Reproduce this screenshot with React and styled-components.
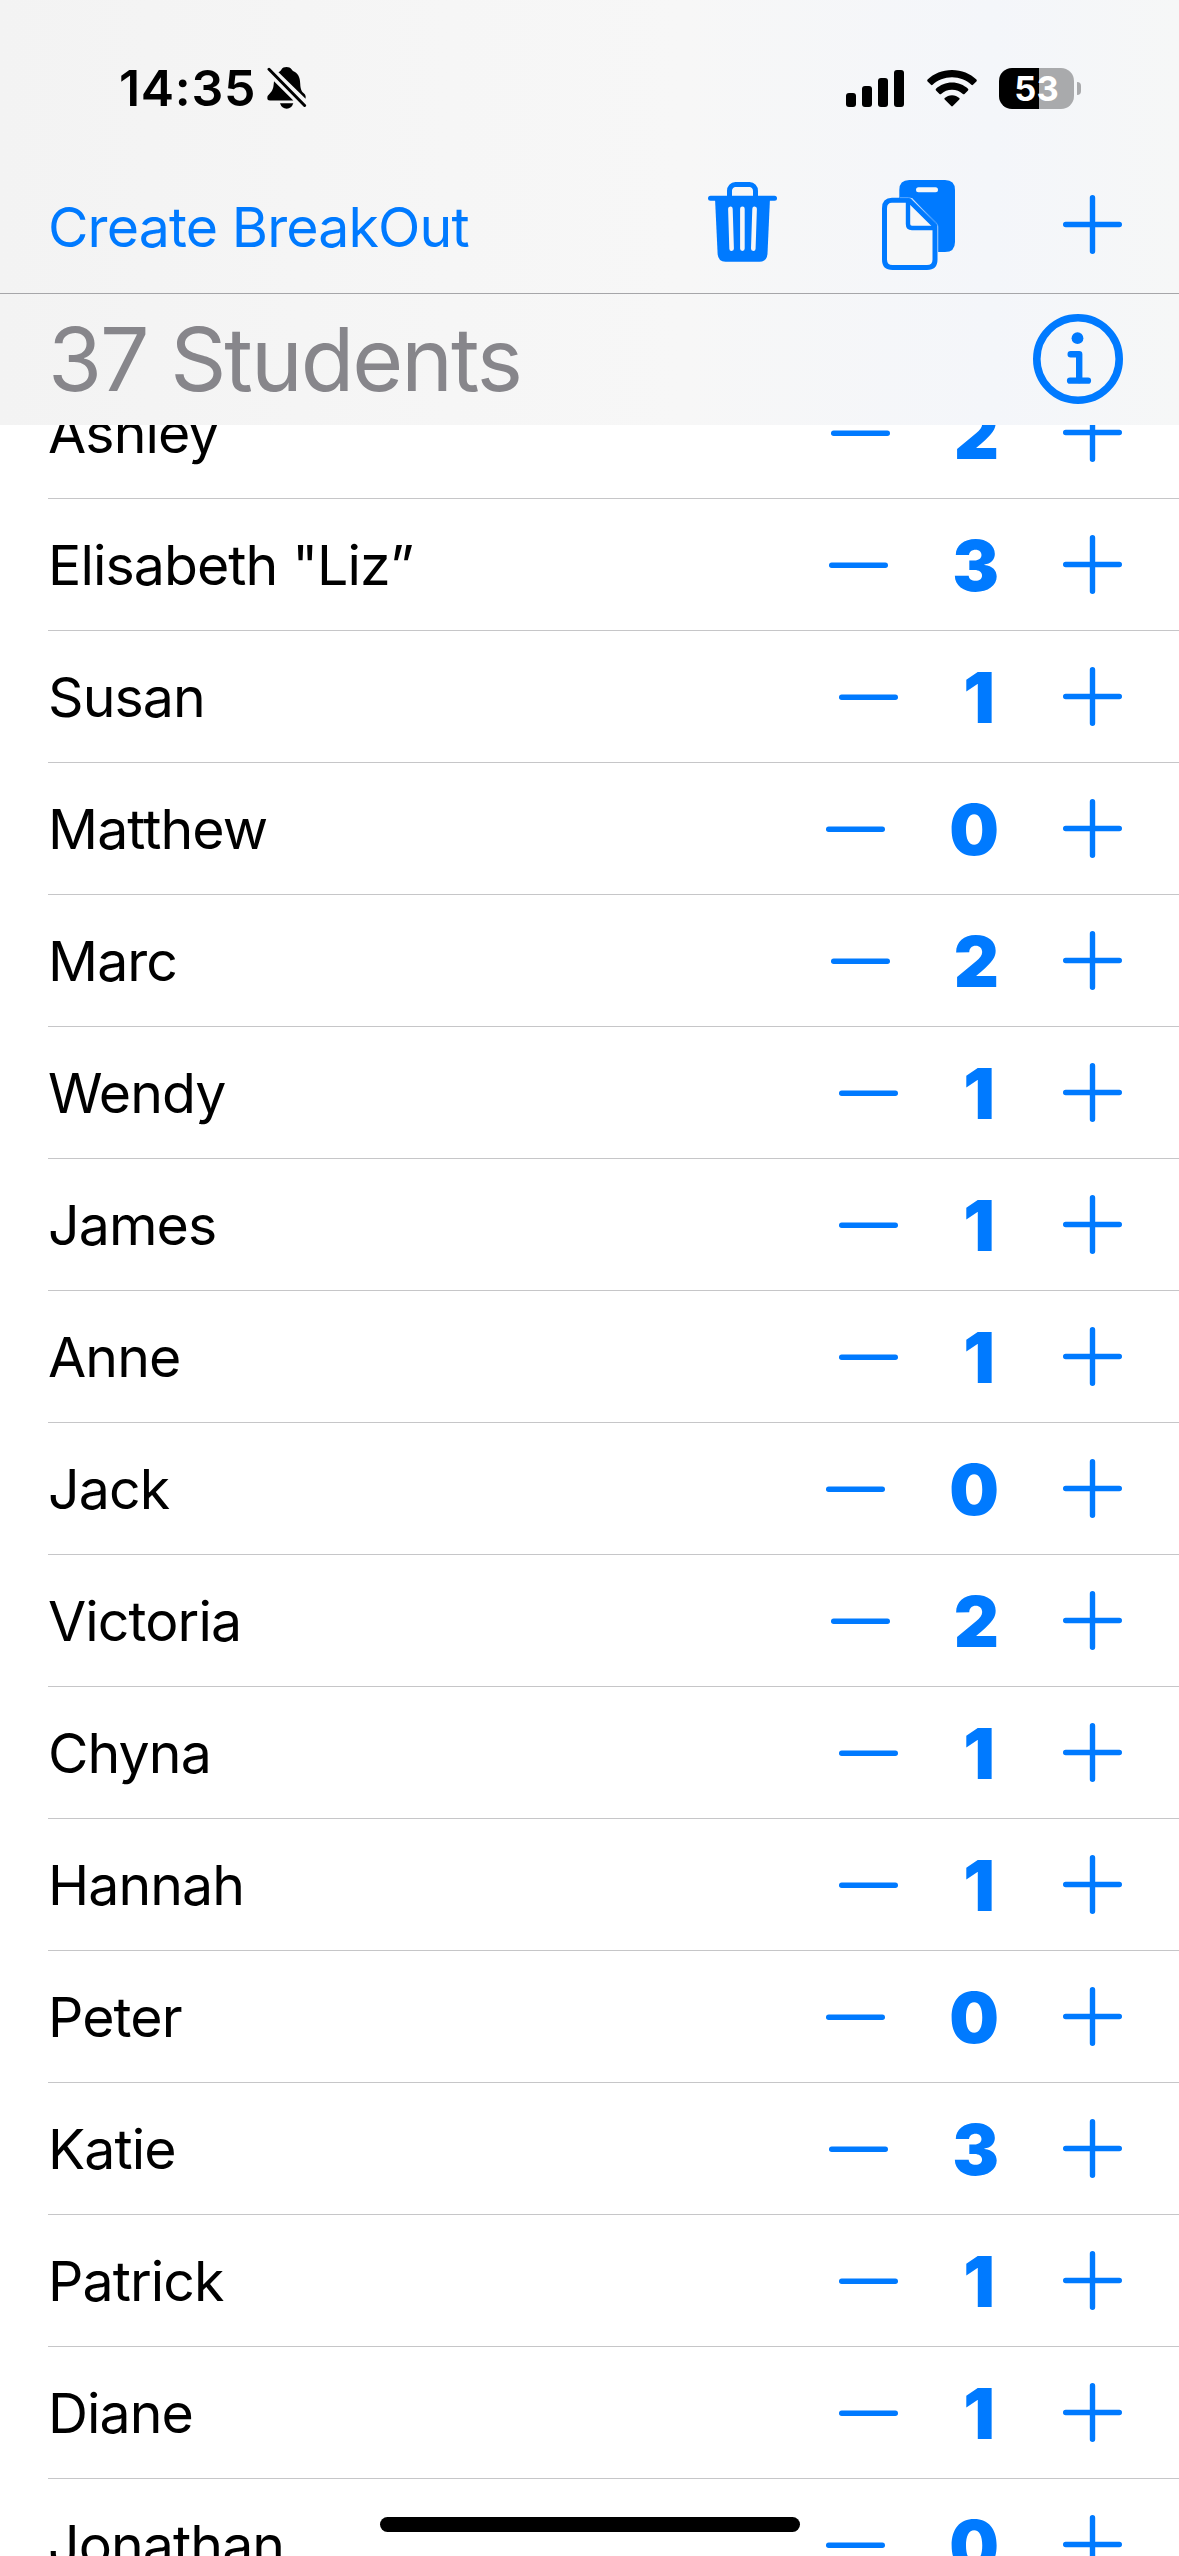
import React from 'react'
import styled, { createGlobalStyle } from 'styled-components'

const blue = '#007aff'

const students = [
  { name: 'Ashley', count: 2 },
  { name: 'Elisabeth "Liz”', count: 3 },
  { name: 'Susan', count: 1 },
  { name: 'Matthew', count: 0 },
  { name: 'Marc', count: 2 },
  { name: 'Wendy', count: 1 },
  { name: 'James', count: 1 },
  { name: 'Anne', count: 1 },
  { name: 'Jack', count: 0 },
  { name: 'Victoria', count: 2 },
  { name: 'Chyna', count: 1 },
  { name: 'Hannah', count: 1 },
  { name: 'Peter', count: 0 },
  { name: 'Katie', count: 3 },
  { name: 'Patrick', count: 1 },
  { name: 'Diane', count: 1 },
  { name: 'Jonathan', count: 0 }
]

const Plus = () => (
  <svg width='59' height='59' viewBox='0 0 59 59' fill='none' stroke={blue} strokeWidth='5.4' strokeLinecap='round'>
    <path d='M2.7 29.5H56.3M29.5 2.7V56.3' />
  </svg>
)

const Minus = () => (
  <svg width='59' height='59' viewBox='0 0 59 59' fill='none' stroke={blue} strokeWidth='5.4' strokeLinecap='round'>
    <path d='M2.7 30.2H56.3' />
  </svg>
)

const Trash = () => (
  <svg width='69' height='80' viewBox='0 0 69 80' fill='none' strokeLinecap='round'>
    <path d='M21.5 16V9A6.2 6.2 0 0 1 27.5 2.5H41.5A6.2 6.2 0 0 1 47.5 9V16' stroke={blue} strokeWidth='5' />
    <path d='M2.5 16.3H66.5' stroke={blue} strokeWidth='5' />
    <path d='M7 16H62L59.5 71.5Q59 79.7 51.5 79.7H17.5Q10 79.7 9.6 71.5Z' fill={blue} />
    <path d='M22.4 26.7L23.6 66.6M34.4 26.7V66.6M46.6 26.7L45.3 66.6' stroke='#f6f6f7' strokeWidth='4.6' />
  </svg>
)

const Docs = () => (
  <svg width='73' height='90' viewBox='0 0 73 90' fill='none'>
    <path d='M17.3 18V10Q17.3 0 27.3 0H63Q73 0 73 10V62Q73 72 63 72H56V46L30 18Z' fill={blue} />
    <rect x='34' y='7.3' width='22' height='5' rx='2.5' fill='#f6f7f8' />
    <path d='M10 20.2H27L53 46V79.5Q53 87.5 45 87.5H10.5Q2.5 87.5 2.5 79.5V28.2Q2.5 20.2 10 20.2Z' fill='#f6f7f8' stroke={blue} strokeWidth='5' />
    <path d='M26 20V44Q26 48 30 48H54' stroke={blue} strokeWidth='4.4' />
    <path d='M18 17.6H26.5Q29 17.6 31 19.6L54 42.6Q56 44.6 56 47V72' stroke='#8fc3fd' strokeWidth='.6' />
  </svg>
)

const Info = () => (
  <svg width='90' height='90' viewBox='0 0 90 90' fill='none' stroke={blue} strokeLinecap='round' strokeLinejoin='round'>
    <circle cx='45' cy='45' r='41.2' strokeWidth='7.6' />
    <circle cx='44.5' cy='24.2' r='5.9' fill={blue} stroke='none' />
    <path d='M37.7 40.2H46.2V66' strokeWidth='6.4' />
    <path d='M37 66.7H55' strokeWidth='6.2' />
  </svg>
)

const BellOff = () => (
  <svg width='40' height='44' viewBox='0 0 40 44'>
    <path d='M11.5 6.2C13.5 4.8 14 4.6 14.6 3.2C16 .6 22.5 .2 24.5 3.2C25.3 4.5 26 4.9 27.5 5.7C32 8.5 33 12 33.2 17.5C33.4 25 35.5 26 38 28.5Q39 30 38.6 32.7Z' />
    <path d='M7 15.3L26.3 34.5H3Q.3 34.5 .3 32Q.3 29.5 3.2 27C6.5 23.8 6.5 20 7 15.3Z' />
    <path d='M13 37.3H26.3Q24.5 42.7 19.7 42.7Q14.8 42.7 13 37.3Z' />
    <path d='M2 3.3L37.6 39.5' stroke='#000' strokeWidth='3' strokeLinecap='round' />
  </svg>
)

const Signal = () => (
  <svg width='58' height='37' viewBox='0 0 58 37'>
    <rect x='0' y='23' width='10' height='14' rx='3' />
    <rect x='16' y='16' width='10' height='21' rx='3' />
    <rect x='32' y='8' width='10' height='29' rx='3' />
    <rect x='48' y='0' width='10' height='37' rx='3' />
  </svg>
)

const Wifi = () => (
  <svg width='50' height='37' viewBox='0 0 50 37'>
    <path d='M25 0C34.7 0 43.3 3.7 49.4 9.6Q50.2 10.5 49.4 11.4L46 14.8Q45.2 15.5 44.4 14.8C39.3 10.1 32.5 7.3 25 7.3S10.7 10.1 5.6 14.8Q4.8 15.5 4 14.8L.6 11.4Q-.2 10.5 .6 9.6C6.7 3.7 15.3 0 25 0Z' />
    <path d='M25 12.6C31.2 12.6 36.8 15 41 18.8Q41.8 19.6 41 20.4L37.5 23.9Q36.7 24.6 35.9 23.9C33 21.3 29.2 19.7 25 19.7S17 21.3 14.1 23.9Q13.3 24.6 12.5 23.9L9 20.4Q8.2 19.6 9 18.8C13.2 15 18.8 12.6 25 12.6Z' />
    <path d='M25 25.2C27.8 25.2 30.4 26.3 32.3 28Q33.1 28.8 32.3 29.6L25.8 36.1Q25 36.9 24.2 36.1L17.7 29.6Q16.9 28.8 17.7 28C19.6 26.3 22.2 25.2 25 25.2Z' />
  </svg>
)

const App = () => (
  <Screen>
    <GlobalStyle />
    <Header>
      <StatusBar>
        <Clock>14:35</Clock>
        <BellOff />
        <StatusIcons>
          <Signal />
          <Wifi />
          <Battery>
            <Level>53</Level>
            <Nub />
          </Battery>
        </StatusIcons>
      </StatusBar>
      <Toolbar>
        <CreateButton>Create BreakOut</CreateButton>
        <Actions>
          <TrashButton>
            <Trash />
          </TrashButton>
          <Docs />
          <Plus />
        </Actions>
      </Toolbar>
      <Summary>
        <Total>37 Students</Total>
        <Info />
      </Summary>
    </Header>
    <List>
      {students.map(({ name, count }) => (
        <Row key={name}>
          <Name>{name}</Name>
          <Stepper>
            <Minus />
            <Count $narrow={count === 1}>{count}</Count>
            <Plus />
          </Stepper>
        </Row>
      ))}
    </List>
    <HomeIndicator />
  </Screen>
)

export default App

const GlobalStyle = createGlobalStyle`
  * {
    box-sizing: border-box;
  }
  body {
    margin: 0;
    background: #fff;
    font-family: Inter, 'Liberation Sans', sans-serif;
  }
  svg {
    display: block;
    flex: none;
  }
`

const Screen = styled.div`
  position: relative;
  display: flex;
  flex-direction: column;
  width: 1179px;
  height: 2556px;
  overflow: hidden;
  background: #fff;
`

const Header = styled.header`
  flex: none;
  height: 425px;
  background: linear-gradient(90deg, #f3f3f3 0%, #f6f6f6 38%, #f7f7f7 58%, #f4f6fa 84%, #f6f7f7 100%);
`

const StatusBar = styled.div`
  display: flex;
  align-items: center;
  height: 176px;
  padding: 0 98px 0 119px;
`

const Clock = styled.span`
  width: 148px;
  font-size: 50px;
  font-weight: 600;
  letter-spacing: 0.7px;
`

const StatusIcons = styled.div`
  display: flex;
  align-items: center;
  margin-left: auto;
  gap: 22.5px;
`

const Battery = styled.div`
  display: flex;
  align-items: center;
  gap: 3px;
`

const Level = styled.span`
  width: 75px;
  height: 41px;
  border-radius: 13px;
  background: linear-gradient(90deg, #000 40px, #a9aaac 40px);
  color: #fff;
  font-size: 34.5px;
  font-weight: 700;
  line-height: 41px;
  text-align: center;
`

const Nub = styled.i`
  width: 4px;
  height: 13px;
  border-radius: 0 4px 4px 0;
  background: #a9aaac;
`

const Toolbar = styled.div`
  display: flex;
  align-items: center;
  justify-content: space-between;
  height: 118px;
  padding: 0 57px 20px 48px;
  border-bottom: 1px solid #a6a6a9;
`

const CreateButton = styled.button`
  padding: 3px 0 0;
  border: 0;
  background: none;
  color: ${blue};
  font: inherit;
  font-size: 55.4px;
  letter-spacing: -0.85px;
`

const Actions = styled.div`
  display: flex;
  align-items: center;
  gap: 108px;
`

const TrashButton = styled.span`
  margin-right: -3px;
  padding-bottom: 5px;
`

const Summary = styled.div`
  display: flex;
  align-items: center;
  justify-content: space-between;
  height: 131px;
  padding: 0 56px 2px 48px;
`

const Total = styled.h1`
  margin: 0;
  color: #87868b;
  font-size: 87.5px;
  font-weight: 400;
  letter-spacing: -2px;
`

const List = styled.ul`
  flex: 1;
  display: flex;
  flex-direction: column;
  justify-content: flex-end;
  min-height: 0;
  margin: 0 0 -55px;
  padding: 0 0 0 48px;
  overflow: hidden;
  list-style: none;
`

const Row = styled.li`
  flex: none;
  display: flex;
  align-items: center;
  justify-content: space-between;
  height: 132px;
  padding-right: 57px;
  border-bottom: 1px solid #c6c6c8;
`

const Name = styled.span`
  font-size: 55.4px;
  letter-spacing: -0.9px;
`

const Stepper = styled.div`
  display: flex;
  align-items: center;
`

const Count = styled.span`
  color: ${blue};
  padding: 2px ${({ $narrow }) => ($narrow ? '68px 0 65px' : '64px 0')};
  font-size: 70px;
  font-weight: 900;
`

const HomeIndicator = styled.div`
  position: absolute;
  left: 380px;
  bottom: 24px;
  width: 420px;
  height: 15px;
  border-radius: 8px;
  background: #000;
`
